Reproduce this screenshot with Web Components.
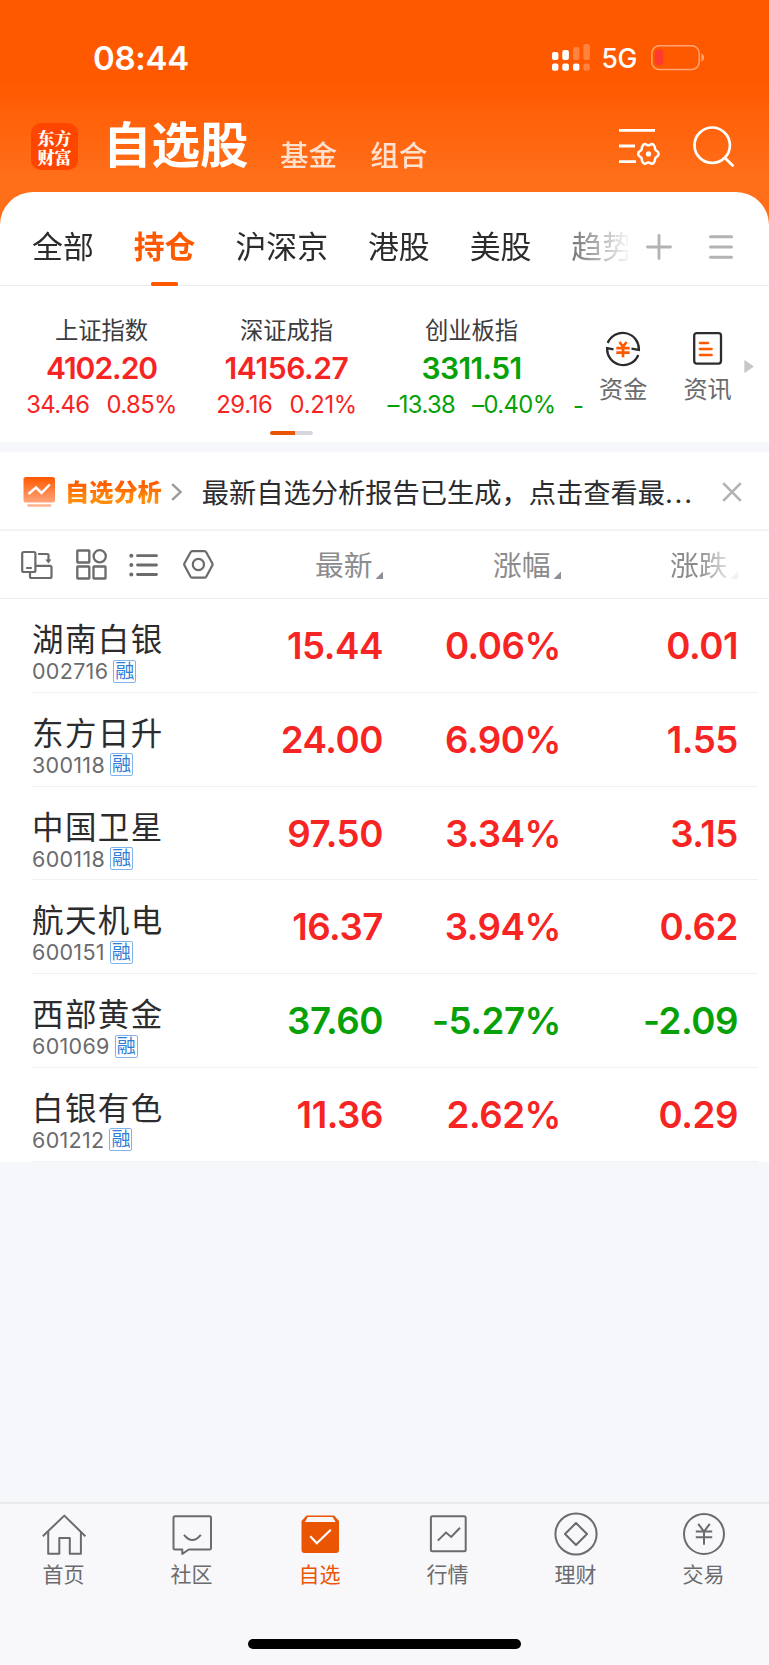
<!DOCTYPE html>
<html lang="zh-CN">
<head>
<meta charset="utf-8">
<title>自选股</title>
<style>
    body{
        margin:0;
        width:769px;
        height:1665px;
        overflow:hidden;
        background:#f6f7fa;
        color:#2c2c2e;
        font-family:Inter, "Noto Sans CJK SC", sans-serif;
    }
</style>
</head>
<body>
<watch-app></watch-app>

<script>
const ICONS = {
    signal: [38, 27, `
        <g fill="#fff"><rect x="0" y="8" width="6.4" height="8" rx="2"/><rect x="10.3" y="6" width="6.6" height="10" rx="2"/>
        <rect x="0" y="19.4" width="6.4" height="7.4" rx="2"/><rect x="10.3" y="19.4" width="6.6" height="7.4" rx="2"/><rect x="21" y="19.4" width="6.4" height="7.4" rx="2"/></g>
        <g fill="#fff" opacity=".25"><rect x="21" y="3" width="6.4" height="13" rx="2"/><rect x="31.4" y="0" width="6.4" height="16" rx="2"/><rect x="31.4" y="19.4" width="6.4" height="7.4" rx="2"/></g>`],
    battery: [54, 26, `
        <rect x=".8" y=".8" width="47.4" height="23.8" rx="7.5" fill="none" stroke="#fff" stroke-opacity=".45" stroke-width="1.5"/>
        <path d="M50.3 8.6q2.8 1 2.8 4t-2.8 4z" fill="#fff" fill-opacity=".45"/>
        <rect x="3.8" y="4.3" width="8.4" height="16" rx="3.8" fill="#ff3b30"/>`],
    filter: [42, 37, `
        <g fill="none" stroke="#fff" stroke-width="2.8"><path d="M0 2.3H36M0 18H16M0 33.7H17"/>
        <path stroke-width="2.5" stroke-linejoin="round" d="M24.5 16.6q1.1-1 2.3-.3l1.2.7q1.4.6 2.8 0l1.2-.7q1.3-.6 2.3.3l1.6 2.4.1 1.8q.1 1.3 1.6 2.1 2 1 2 3t-2 3q-1.5.8-1.6 2.1l-.1 1.8-1.6 2.4q-1 .9-2.3.3l-1.2-.7q-1.4-.6-2.8 0l-1.2.7q-1.2.7-2.3-.3l-1.6-2.4-.1-1.8q-.1-1.3-1.6-2.1-2-1-2-3t2-3q1.5-.8 1.6-2.1l.1-1.8z"/></g>
        <circle cx="29.5" cy="25.9" r="2.6" fill="#fff"/>`],
    search: [42, 42, `
        <g fill="none" stroke="#fff" stroke-width="2.7"><circle cx="19.2" cy="19.2" r="17.7"/><path d="M31.5 31.5L40.5 40.3"/></g>`],
    plus: [26, 26, `<path d="M13 1.5V24.5M1.5 13H24.5" stroke="#b3b3b3" stroke-width="2.8" stroke-linecap="round"/>`],
    menu: [24, 24, `<path d="M1.5 1.7H22.5M1.5 12H22.5M1.5 22.2H22.5" stroke="#b3b3b3" stroke-width="3" stroke-linecap="round"/>`],
    funds: [36, 36, `
        <g fill="none" stroke="#2c2c2e" stroke-width="2.3"><path d="M2.7 12A16.2 16.2 0 0 1 33.9 18.8L26.5 17.6"/><path d="M33.3 24A16.2 16.2 0 0 1 2.1 17.2L8.5 18.4"/></g>
        <path d="M14.4 11L18 15.5L21.6 11M11.3 17.2H24.7M11.3 21.6H24.7M18 15.5V26.2" fill="none" stroke="#ff5900" stroke-width="2.7"/>`],
    news: [30, 33, `
        <rect x="1.2" y="1.2" width="26.8" height="30.4" rx="2.5" fill="none" stroke="#2c2c2e" stroke-width="2.3"/>
        <path d="M7 11H15M7 17H18.5M7 23H18.5" stroke="#ff5900" stroke-width="2.7" stroke-linecap="round"/>`],
    next: [10, 13, `<path d="M.3 .5Q.3 0 1 .3L9.3 6Q9.8 6.5 9.3 7L1 12.7Q.3 13 .3 12.5z" fill="#c8c8ca"/>`],
    report: [33, 31, `
        <defs><linearGradient id="g" x2="0" y2="1"><stop stop-color="#ff5900"/><stop offset="1" stop-color="#ffa47b"/></linearGradient></defs>
        <rect x=".5" y="0" width="31.5" height="25.5" rx="2.5" fill="url(#g)"/><path d="M5.5 17L13 10.5L18.5 16L26.8 7.5" fill="none" stroke="#fff" stroke-width="2.5"/>
        <path d="M5.5 28.6H27" stroke="#ffb290" stroke-width="2.5" stroke-linecap="round"/>`],
    chevron: [11, 18, `<path d="M1.2 1.2L9.5 9L1.2 16.8" fill="none" stroke="#999" stroke-width="2.4"/>`],
    close: [20, 20, `<path d="M1.2 1.2L18.8 18.8M18.8 1.2L1.2 18.8" stroke="#b3b3b3" stroke-width="2.6"/>`],
    rotate: [32, 30, `
        <g fill="none" stroke="#6b6b6d" stroke-width="2.2"><rect x="1.2" y="2" width="13.2" height="20" rx="1.5"/><path d="M5.2 18H10.8M17 4H26.5Q27.5 4 27.5 5V11M14.4 15.8H29Q30.5 15.8 30.5 17.3V26.5Q30.5 28 29 28H10.5Q9 28 9 26.5V22"/></g>
        <path d="M24.3 9.5H30.5L27.4 13.5z" fill="#6b6b6d"/>`],
    grid: [31, 31, `
        <g fill="none" stroke="#6b6b6d" stroke-width="2.3"><rect x="1.3" y="1.5" width="12" height="12" rx=".6"/><circle cx="23.7" cy="7.3" r="6.1"/><rect x="1.3" y="17.5" width="12" height="12" rx=".6"/><rect x="17.5" y="17.5" width="12" height="12" rx=".6"/></g>`],
    list: [29, 24, `
        <path d="M8.5 2.7H27.5M8.5 12H27.5M8.5 21.5H27.5" stroke="#6b6b6d" stroke-width="2.8" stroke-linecap="round"/>
        <g fill="#6b6b6d"><circle cx="2.3" cy="2.7" r="2"/><circle cx="2.3" cy="12" r="2"/><circle cx="2.3" cy="21.5" r="2"/></g>`],
    hexagon: [31, 29, `
        <g fill="none" stroke="#6b6b6d" stroke-width="2.2"><path stroke-linejoin="round" d="M9.3 1.2H21.5Q22.6 1.2 23.2 2.2L29.3 13.3Q29.9 14.4 29.3 15.5L23.2 26.7Q22.6 27.7 21.5 27.7H9.3Q8.2 27.7 7.6 26.7L1.5 15.5Q.9 14.4 1.5 13.3L7.6 2.2Q8.2 1.2 9.3 1.2z"/><circle cx="15.4" cy="14.5" r="5.6"/></g>`],
    home: [44, 44, `
        <g fill="none" stroke="#6b6b6d" stroke-width="2" stroke-linejoin="round"><path d="M.8 24.3L22.3 3.6L43.4 24.3"/><path d="M6.2 19.5V41.8H17.3V26H27.8V41.8H38.9V19.5"/></g>`],
    chat: [44, 44, `
        <g fill="none" stroke="#6b6b6d" stroke-width="2" stroke-linejoin="round"><path d="M5 4.3H39.5Q41 4.3 41 5.8V36Q41 37.5 39.5 37.5H18.7L12.3 42V37.5H5Q3.5 37.5 3.5 36V5.8Q3.5 4.3 5 4.3z"/><path d="M14 22.8Q22.3 33.2 30.8 22.8"/></g>`],
    pick: [44, 44, `
        <path d="M8.5 3.4H36L41 9V38Q41 41 38 41H6.5Q3.5 41 3.5 38V9z" fill="#ea5504"/>
        <path d="M9.8 5.1H34.7L37.6 9.9H6.9z" fill="#f8f8fb"/><path d="M12.3 24.3L18.8 31.3L32.8 17.8" fill="none" stroke="#fff" stroke-width="2.2"/>`],
    market: [44, 44, `
        <g fill="none" stroke="#6b6b6d" stroke-width="2"><rect x="4.9" y="4.3" width="34.8" height="35" rx="1.5"/><path d="M11.8 28.6L20 20.6L25.2 25L34 15.8"/></g>`],
    wealth: [44, 44, `
        <g fill="none" stroke="#6b6b6d" stroke-width="2" stroke-linejoin="round"><circle cx="22" cy="22" r="20.6"/><path d="M22 11L33 22L22 33L11 22z"/></g>`],
    trade: [44, 44, `
        <g fill="none" stroke="#6b6b6d" stroke-width="2"><circle cx="22" cy="22" r="20"/><path d="M16.2 11.8L22 19.5L27.8 11.8M13.8 19.5H30.2M13.8 25.3H30.2M22 19.5V32.8"/></g>`]
};

class appIcon extends HTMLElement {
    constructor() {
        super();
        this.attachShadow({ mode: 'open' });
    }

    connectedCallback() {
        const [w, h, body] = ICONS[this.getAttribute('name')];
        this.shadowRoot.innerHTML = /*html*/`
        <style>
        :host{
            display:block;
            flex:none;
            width:${w}px;
            height:${h}px;
        }
        svg{
            display:block;
        }
        </style>
        <svg width="${w}" height="${h}" viewBox="0 0 ${w} ${h}">${body}</svg>
        `;
    }
}
customElements.define('app-icon', appIcon);

class statusBar extends HTMLElement {
    constructor() {
        super();
        this.attachShadow({ mode: 'open' });
    }

    static get styles() {
        return /*css*/`
        :host{
            display:flex;
            align-items:center;
            height:115px;
            box-sizing:border-box;
            padding:0 64px 0 93px;
            color:#fff;
        }
        .time{
            flex:1;
            font-size:33px;
            font-weight:600;
            letter-spacing:-.3px;
        }
        .net{
            font-size:26.5px;
            font-weight:500;
            letter-spacing:-.3px;
            margin:0 14px 0 11px;
        }
    `;
    }

    connectedCallback() {
        this.shadowRoot.innerHTML = /*html*/`
        <style>${statusBar.styles}</style>
        <span class="time">08:44</span>
        <app-icon name="signal"></app-icon>
        <span class="net">5G</span>
        <app-icon name="battery"></app-icon>
    `;
    }
}
customElements.define('status-bar', statusBar);

class titleBar extends HTMLElement {
    constructor() {
        super();
        this.attachShadow({ mode: 'open' });
    }

    static get styles() {
        return /*css*/`
        :host{
            display:flex;
            align-items:flex-start;
            height:77px;
            box-sizing:border-box;
            padding:8px 34px 0 31px;
            color:#fff;
        }
        .logo{
            width:47px;
            height:47px;
            border-radius:10px;
            background:#ff4600;
            display:grid;
            align-content:center;
            justify-content:center;
            font:900 17px/19px "Noto Serif CJK SC", "Noto Sans CJK SC", sans-serif;
        }
        h1{
            margin:0 0 0 25px;
            width:147px;
            font-size:48.5px;
            line-height:46px;
            font-weight:700;
            white-space:nowrap;
        }
        .sub{
            margin:18px 0 0 30px;
            font-size:28.6px;
            line-height:30px;
            font-weight:500;
            opacity:.8;
        }
        .sub + .sub{
            margin-left:33px;
        }
        .actions{
            display:flex;
            flex:1;
            justify-content:flex-end;
            gap:32px;
            padding-top:3px;
        }
        .actions app-icon:first-child{
            margin-top:2px;
        }
    `;
    }

    connectedCallback() {
        this.shadowRoot.innerHTML = /*html*/`
        <style>${titleBar.styles}</style>
        <div class="logo"><span>东方</span><span>财富</span></div>
        <h1>自选股</h1>
        <span class="sub">基金</span>
        <span class="sub">组合</span>
        <div class="actions">
            <app-icon name="filter"></app-icon>
            <app-icon name="search"></app-icon>
        </div>
    `;
    }
}
customElements.define('title-bar', titleBar);

class groupTabs extends HTMLElement {
    constructor() {
        super();
        this.attachShadow({ mode: 'open' });
    }

    static get styles() {
        return /*css*/`
        :host{
            display:flex;
            align-items:center;
            height:94px;
            box-sizing:border-box;
            border-bottom:1px solid #ebebed;
            padding-right:36px;
        }
        .tabs{
            display:flex;
            gap:39.9px;
            width:628px;
            height:94px;
            box-sizing:border-box;
            padding-left:32px;
            overflow:hidden;
            white-space:nowrap;
            -webkit-mask:linear-gradient(90deg, #000 540px, transparent 632px);
        }
        .tab{
            flex:none;
            display:flex;
            flex-direction:column;
            align-items:center;
            justify-content:space-between;
            font-size:30.9px;
            line-height:110px;
            height:94px;
        }
        .on{
            color:#ff5900;
            font-weight:700;
        }
        .on::after{
            content:"";
            width:27px;
            height:4px;
            border-radius:1.5px;
            background:#ff5900;
            margin-top:-20px;
        }
        .more{
            display:flex;
            align-items:center;
            flex:1;
            justify-content:space-between;
            padding:16px 0 0 18px;
        }
    `;
    }

    connectedCallback() {
        const names = ['全部', '持仓', '沪深京', '港股', '美股', '趋势'];
        this.shadowRoot.innerHTML = /*html*/`
        <style>${groupTabs.styles}</style>
        <div class="tabs">
            ${names.map(n => `<span class="tab ${n === '持仓' ? 'on' : ''}">${n}</span>`).join('')}
        </div>
        <div class="more">
            <app-icon name="plus"></app-icon>
            <app-icon name="menu"></app-icon>
        </div>
    `;
    }
}
customElements.define('group-tabs', groupTabs);

class indexCard extends HTMLElement {
    constructor() {
        super();
        this.attachShadow({ mode: 'open' });
    }

    static get styles() {
        return /*css*/`
        :host{
            display:flex;
            flex:none;
            flex-direction:column;
            align-items:center;
            width:185px;
            color:#f72424;
            white-space:nowrap;
        }
        :host([down]){
            color:#06a106;
        }
        .name{
            color:#3c3c3e;
            font-size:23.3px;
            line-height:34px;
        }
        .price{
            font-size:30px;
            line-height:40px;
            font-weight:600;
            letter-spacing:var(--price-gap, -.6px);
        }
        .change{
            display:flex;
            gap:17px;
            font-size:23.8px;
            line-height:34px;
            letter-spacing:var(--change-gap, -.6px);
        }
    `;
    }

    connectedCallback() {
        this.shadowRoot.innerHTML = /*html*/`
        <style>${indexCard.styles}</style>
        <span class="name"><slot></slot></span>
        <span class="price">${this.getAttribute('price')}</span>
        <span class="change"><span>${this.getAttribute('diff')}</span><span>${this.getAttribute('rate')}</span></span>
    `;
    }
}
customElements.define('index-card', indexCard);

class indexPanel extends HTMLElement {
    constructor() {
        super();
        this.attachShadow({ mode: 'open' });
    }

    static get styles() {
        return /*css*/`
        :host{
            display:flex;
            height:156px;
        }
        .left{
            width:584px;
            overflow:hidden;
        }
        .cards{
            display:flex;
            padding:28px 0 0 9px;
        }
        index-card:first-child{
            --price-gap:-1px;
        }
        index-card:nth-child(2){
            --change-gap:-.3px;
            --price-gap:-.4px;
        }
        .next{
            flex:none;
            margin:75px 0 0 9px;
            color:#06a106;
            font-size:23.8px;
            line-height:33px;
        }
        .pager{
            width:43px;
            height:4px;
            margin:9px 0 0 270px;
            border-radius:2px;
            background:linear-gradient(90deg, #ea5504 25px, #d5d7dc 25px);
        }
        .tool{
            display:flex;
            flex-direction:column;
            align-items:center;
            justify-content:space-between;
            height:76px;
            margin:45px 0 0 15px;
            font-size:24.2px;
            line-height:34px;
            color:#6b6b6d;
        }
        .tool + .tool{
            margin-left:36px;
        }
        .tool + .tool app-icon{
            margin-top:1px;
        }
        .arrow{
            margin:74px 0 0 12px;
        }
    `;
    }

    connectedCallback() {
        this.shadowRoot.innerHTML = /*html*/`
        <style>${indexPanel.styles}</style>
        <div class="left">
            <div class="cards">
                <index-card price="4102.20" diff="34.46" rate="0.85%">上证指数</index-card>
                <index-card price="14156.27" diff="29.16" rate="0.21%">深证成指</index-card>
                <index-card down price="3311.51" diff="–13.38" rate="–0.40%">创业板指</index-card>
                <span class="next">-</span>
            </div>
            <div class="pager"></div>
        </div>
        <div class="tool"><app-icon name="funds"></app-icon>资金</div>
        <div class="tool"><app-icon name="news"></app-icon>资讯</div>
        <app-icon class="arrow" name="next"></app-icon>
    `;
    }
}
customElements.define('index-panel', indexPanel);

class noticeBar extends HTMLElement {
    constructor() {
        super();
        this.attachShadow({ mode: 'open' });
    }

    static get styles() {
        return /*css*/`
        :host{
            display:flex;
            align-items:center;
            height:89px;
            box-sizing:border-box;
            border-top:10px solid #f6f7fa;
            border-bottom:2px solid #f3f3f5;
            padding:3px 27px 0 23px;
        }
        b{
            margin:-3px 9px 0 9px;
            font-size:24.2px;
            font-weight:900;
            background:linear-gradient(#ff5900 25%, #ff8c0a 75%);
            -webkit-background-clip:text;
            color:transparent;
        }
        .text{
            flex:1;
            margin:-3px 0 0 20px;
            font-size:27.25px;
            white-space:nowrap;
        }
        .dots{
            letter-spacing:1.7px;
            margin-left:0;
        }
    `;
    }

    connectedCallback() {
        this.shadowRoot.innerHTML = /*html*/`
        <style>${noticeBar.styles}</style>
        <app-icon name="report"></app-icon>
        <b>自选分析</b>
        <app-icon name="chevron"></app-icon>
        <span class="text">最新自选分析报告已生成，点击查看最<span class="dots">...</span></span>
        <app-icon name="close"></app-icon>
    `;
    }
}
customElements.define('notice-bar', noticeBar);

class tableHead extends HTMLElement {
    constructor() {
        super();
        this.attachShadow({ mode: 'open' });
    }

    static get styles() {
        return /*css*/`
        :host{
            display:grid;
            grid-template-columns:214px 169px 178px 177px;
            align-items:center;
            height:68px;
            box-sizing:border-box;
            border-bottom:1px solid #efeff1;
        }
        .tools{
            display:flex;
            align-items:center;
            gap:22.5px;
            padding:0 0 0 21px;
        }
        .tools app-icon:nth-child(3){
            margin-right:2px;
        }
        .col{
            display:flex;
            align-items:flex-end;
            justify-content:flex-end;
            gap:3px;
            color:#8c8c8e;
            font-size:28.8px;
            line-height:38px;
            padding-top:3px;
        }
        .col::after{
            content:"";
            width:7.5px;
            height:7.5px;
            margin-bottom:6px;
            background:#8f8f96;
            clip-path:polygon(100% 0, 100% 100%, 0 100%);
        }
        .col:last-child{
            -webkit-mask:linear-gradient(90deg, #000 137px, rgba(0,0,0,.12) 172px);
        }
    `;
    }

    connectedCallback() {
        this.shadowRoot.innerHTML = /*html*/`
        <style>${tableHead.styles}</style>
        <div class="tools">
            <app-icon name="rotate"></app-icon>
            <app-icon name="grid"></app-icon>
            <app-icon name="list"></app-icon>
            <app-icon name="hexagon"></app-icon>
        </div>
        <span class="col">最新</span>
        <span class="col">涨幅</span>
        <span class="col">涨跌</span>
    `;
    }
}
customElements.define('table-head', tableHead);

class stockRow extends HTMLElement {
    constructor() {
        super();
        this.attachShadow({ mode: 'open' });
    }

    static get styles() {
        return /*css*/`
        :host{
            display:grid;
            grid-template-columns:168px 183px 178px 177px;
            height:93.8px;
            box-sizing:border-box;
            margin:0 11px 0 32px;
            border-bottom:1px solid #f1f1f3;
            color:#f72424;
        }
        :host([down]){
            color:#06a106;
        }
        .info{
            padding:21px 0 0 0;
            color:#2c2c2e;
        }
        .name{
            font-size:31.5px;
            line-height:39px;
            letter-spacing:1.4px;
            white-space:nowrap;
        }
        .code{
            display:flex;
            align-items:center;
            height:24px;
            gap:5px;
            font-size:21.5px;
            letter-spacing:.3px;
            color:#6b6b6d;
        }
        .badge{
            width:21px;
            height:21px;
            border:1.5px solid #82b4ec;
            border-radius:2px;
            font-size:19px;
            line-height:21px;
            text-align:center;
            letter-spacing:0;
            color:#2f7fd8;
        }
        .num{
            text-align:right;
            font-size:36.7px;
            line-height:44px;
            padding-top:25px;
            font-weight:600;
            letter-spacing:-.45px;
        }
    `;
    }

    connectedCallback() {
        this.shadowRoot.innerHTML = /*html*/`
        <style>${stockRow.styles}</style>
        <div class="info">
            <div class="name"><slot></slot></div>
            <div class="code"><span>${this.getAttribute('code')}</span><span class="badge">融</span></div>
        </div>
        <span class="num">${this.getAttribute('price')}</span>
        <span class="num">${this.getAttribute('rate')}</span>
        <span class="num">${this.getAttribute('diff')}</span>
    `;
    }
}
customElements.define('stock-row', stockRow);

class navItem extends HTMLElement {
    constructor() {
        super();
        this.attachShadow({ mode: 'open' });
    }

    connectedCallback() {
        this.shadowRoot.innerHTML = /*html*/`
        <style>
        :host{
            display:flex;
            flex:1;
            flex-direction:column;
            align-items:center;
            gap:3px;
            color:#6b6b6d;
            font-size:21px;
            line-height:32px;
        }
        :host([active]){
            color:#ea5504;
        }
        .label{
            margin-right:1px;
        }
        </style>
        <app-icon name="${this.getAttribute('icon')}"></app-icon>
        <span class="label"><slot></slot></span>
    `;
    }
}
customElements.define('nav-item', navItem);

class bottomNav extends HTMLElement {
    constructor() {
        super();
        this.attachShadow({ mode: 'open' });
    }

    static get styles() {
        return /*css*/`
        :host{
            display:flex;
            flex-direction:column;
            justify-content:space-between;
            align-items:center;
            height:163px;
            box-sizing:border-box;
            border-top:2px solid #e9eaec;
            background:#f8f8fb;
            padding:8px 0 16px;
        }
        nav{
            display:flex;
            width:100%;
            box-sizing:border-box;
            padding-right:1px;
        }
        .home{
            width:273px;
            height:10px;
            border-radius:5px;
            background:#000;
        }
    `;
    }

    connectedCallback() {
        this.shadowRoot.innerHTML = /*html*/`
        <style>${bottomNav.styles}</style>
        <nav>
            <nav-item icon="home">首页</nav-item>
            <nav-item icon="chat">社区</nav-item>
            <nav-item icon="pick" active>自选</nav-item>
            <nav-item icon="market">行情</nav-item>
            <nav-item icon="wealth">理财</nav-item>
            <nav-item icon="trade">交易</nav-item>
        </nav>
        <div class="home"></div>
    `;
    }
}
customElements.define('bottom-nav', bottomNav);

class watchApp extends HTMLElement {
    constructor() {
        super();
        this.attachShadow({ mode: 'open' });
    }

    static get styles() {
        return /*css*/`
        :host{
            display:flex;
            flex-direction:column;
            height:1665px;
            background:linear-gradient(#ff5900 80px, #ff6f1a 180px, #ff6f1a 260px, #f6f7fa 260px);
        }
        .sheet{
            background:#fff;
            border-radius:33px 33px 0 0;
        }
        bottom-nav{
            margin-top:auto;
        }
    `;
    }

    connectedCallback() {
        this.shadowRoot.innerHTML = /*html*/`
        <style>${watchApp.styles}</style>
        <status-bar></status-bar>
        <title-bar></title-bar>
        <div class="sheet">
            <group-tabs></group-tabs>
            <index-panel></index-panel>
            <notice-bar></notice-bar>
            <table-head></table-head>
            <stock-row code="002716" price="15.44" rate="0.06%" diff="0.01">湖南白银</stock-row>
            <stock-row code="300118" price="24.00" rate="6.90%" diff="1.55">东方日升</stock-row>
            <stock-row code="600118" price="97.50" rate="3.34%" diff="3.15">中国卫星</stock-row>
            <stock-row code="600151" price="16.37" rate="3.94%" diff="0.62">航天机电</stock-row>
            <stock-row down code="601069" price="37.60" rate="-5.27%" diff="-2.09">西部黄金</stock-row>
            <stock-row code="601212" price="11.36" rate="2.62%" diff="0.29">白银有色</stock-row>
        </div>
        <bottom-nav></bottom-nav>
    `;
    }
}
customElements.define('watch-app', watchApp);
</script>
</body>
</html>
